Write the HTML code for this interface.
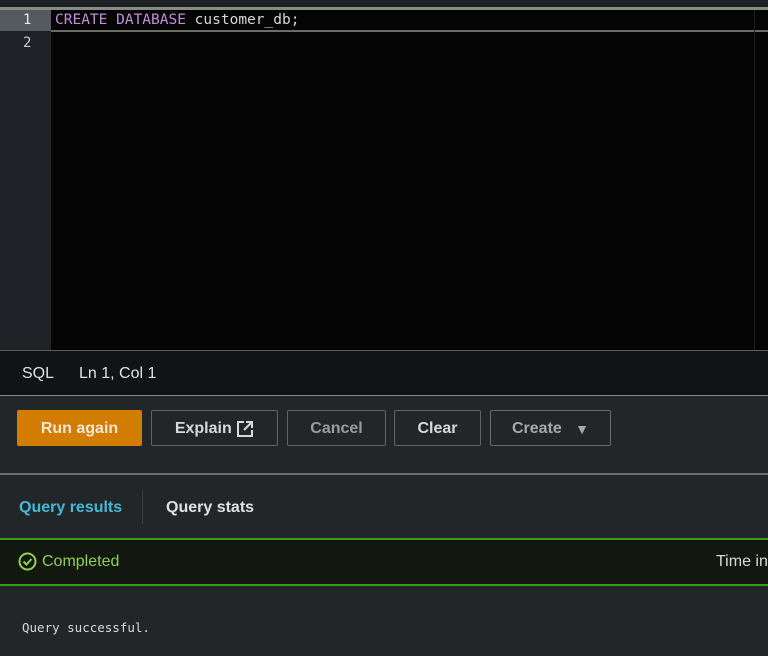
<!DOCTYPE html>
<html><head><style>
body{margin:0;width:768px;height:656px;background:#232629;overflow:hidden;position:relative;font-family:"Liberation Sans",sans-serif}
div{position:absolute;box-sizing:border-box}
.mono{font-family:"DejaVu Sans Mono","Liberation Mono",monospace;font-size:14.5px}
.btn{top:410px;height:36px;border:1px solid #5f6368;border-radius:2px;color:#d5dbdb;font-weight:bold;font-size:16px;display:flex;align-items:center;justify-content:center;padding-top:2px}
</style></head><body>
<div style="left:0;top:0;width:768px;height:7px;background:#1d2025"></div>
<div style="left:0;top:7px;width:768px;height:3px;background:#8a8a85"></div>
<div style="left:0;top:10px;width:768px;height:340px;background:#040404"></div>
<div style="left:0;top:10px;width:51px;height:340px;background:#1e2227"></div>
<div style="left:0;top:10px;width:51px;height:21px;background:#545a5f"></div>
<div style="left:51px;top:30px;width:717px;height:2px;background:#6d6d68"></div>
<div style="left:754px;top:10px;width:1px;height:340px;background:#1e1e1e"></div>
<div class="mono" style="left:23px;top:12px;color:#e8e8e8;font-size:14px">1</div>
<div class="mono" style="left:23px;top:35px;color:#c8c8c8;font-size:14px">2</div>
<div class="mono" style="left:55px;top:12px;color:#d7d7d7;white-space:pre"><span style="color:#c38fd9">CREATE DATABASE</span> customer_db;</div>
<div style="left:0;top:350px;width:768px;height:46px;background:#121317;border-top:1px solid #615b50;border-bottom:1px solid #8a8477"></div>
<div style="left:22px;top:365px;color:#e1e1e1;font-size:16px">SQL</div>
<div style="left:79px;top:365px;color:#e1e1e1;font-size:16px">Ln 1, Col 1</div>
<div class="btn" style="left:17px;width:125px;background:#d27c00;border-color:#d27c00;color:#f2e6d6">Run again</div>
<div class="btn" style="left:151px;width:127px">Explain&nbsp;<svg width="18" height="18" viewBox="0 0 18 18"><path d="M8 2H2v14h14v-6" fill="none" stroke="#d5dbdb" stroke-width="2"/><path d="M10 2h6v6M16 2L8 10" fill="none" stroke="#d5dbdb" stroke-width="2"/></svg></div>
<div class="btn" style="left:287px;width:99px;color:#9c9c9c">Cancel</div>
<div class="btn" style="left:394px;width:87px">Clear</div>
<div class="btn" style="left:490px;width:121px;color:#a8a8a4;border-color:#6d6a63">Create&nbsp;&nbsp;&nbsp;<span style="font-size:14px">▼</span></div>
<div style="left:0;top:473px;width:768px;height:2px;background:#6f6b63"></div>
<div style="left:19px;top:499px;color:#44b9d6;font-weight:bold;font-size:16px">Query results</div>
<div style="left:142px;top:490px;width:1px;height:34px;background:#3a3d40"></div>
<div style="left:166px;top:499px;color:#e1e1e1;font-weight:bold;font-size:16px">Query stats</div>
<div style="left:0;top:538px;width:768px;height:48px;background:#121810;border-top:2px solid #3e9a1e;border-bottom:2px solid #3e9a1e"></div>
<svg style="position:absolute;left:18px;top:552px" width="19" height="19" viewBox="0 0 19 19"><circle cx="9.5" cy="9.5" r="8" fill="none" stroke="#8fd14f" stroke-width="2"/><path d="M5.5 9.5l3 3 5-5.5" fill="none" stroke="#8fd14f" stroke-width="2"/></svg>
<div style="left:42px;top:553px;color:#8fd14f;font-size:16px">Completed</div>
<div style="left:716px;top:553px;color:#d5dbdb;font-size:16px;white-space:nowrap">Time in</div>
<div class="mono" style="left:22px;top:620px;color:#d5dbdb;font-size:12.5px">Query successful.</div>
</body></html>
